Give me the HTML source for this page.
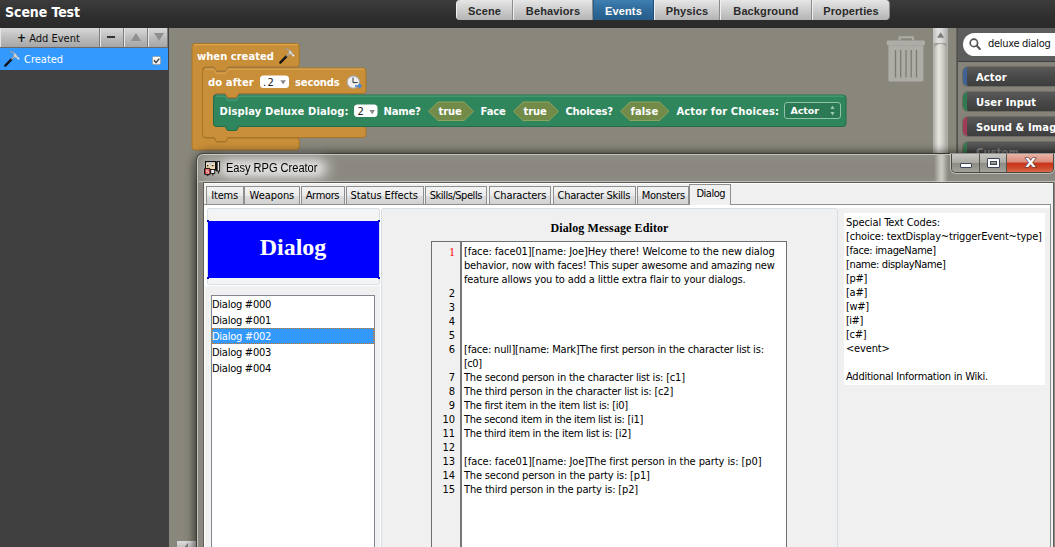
<!DOCTYPE html>
<html>
<head>
<meta charset="utf-8">
<title>Scene Test</title>
<style>
html,body{margin:0;padding:0;}
body{width:1055px;height:547px;overflow:hidden;position:relative;background:#89877b;font-family:"Liberation Sans",sans-serif;}
.abs{position:absolute;}
#topbar{left:0;top:0;width:1055px;height:28px;background:linear-gradient(#3c3c3c,#2e2e2e 60%,#2a2a2a);}
#title{left:5px;top:4px;color:#fff;font-family:"DejaVu Sans Condensed","DejaVu Sans",sans-serif;font-weight:bold;font-size:14px;letter-spacing:-0.08px;white-space:nowrap;}
.ttab{top:0;height:20px;box-sizing:border-box;background:linear-gradient(#e6e6e6,#cfcfcf 45%,#b4b4b4);border-right:1px solid #8a8a8a;border-left:1px solid #f0f0f0;color:#2a2a2a;font-weight:bold;font-size:11px;letter-spacing:0.12px;text-align:center;line-height:23px;white-space:nowrap;}
.ttab.sel{background:linear-gradient(#3f7fb2,#2f6a9a 50%,#265d8c);color:#fff;border-left:1px solid #2a5f8c;border-right:1px solid #1e4e78;}
#sidebar{left:0;top:28px;width:169px;height:519px;background:#404040;}
.sbtn{top:28px;height:19px;background:linear-gradient(#d9d9d9,#bdbdbd 50%,#a6a6a6);box-sizing:border-box;border-right:1px solid #7e7e7e;border-left:1px solid #e4e4e4;}
#selrow{left:0;top:48px;width:168px;height:22px;background:#3399ff;}
#canvas{left:169px;top:28px;width:789px;height:519px;background:#89877b;}
.blk{font-family:"DejaVu Sans","Liberation Sans",sans-serif;font-weight:bold;font-size:10px;letter-spacing:0.1px;line-height:12px;color:#fff;white-space:nowrap;}
.cat{left:963px;width:110px;height:19px;box-sizing:border-box;border-radius:5px;border-left:4px solid #444;background:linear-gradient(#5a5a5a,#484848 50%,#3e3e3e);color:#fff;font-family:"DejaVu Sans",sans-serif;font-weight:bold;font-size:10px;letter-spacing:0.1px;line-height:21px;padding-left:9px;white-space:nowrap;box-shadow:0 0 0 1px #6e6c63;}

.tah{font-family:"DejaVu Sans Condensed","DejaVu Sans","Liberation Sans",sans-serif;font-size:11px;color:#000;white-space:nowrap;line-height:14px;letter-spacing:-0.08px;}
.wtab{top:186px;height:18px;box-sizing:border-box;border:1px solid #8e8f8f;border-bottom:none;background:linear-gradient(#f3f3f3,#ebebeb 50%,#dddddd 51%,#d2d2d2);text-align:center;line-height:20px;}
.ln{left:433px;width:22px;text-align:right;}
.el{left:464px;}
.sc{left:846px;}
.li{left:212px;}
</style>
</head>
<body>
<div id="topbar" class="abs"></div>
<div id="title" class="abs">Scene Test</div>

<div class="abs ttab" style="left:456px;width:57px;border-radius:4px 0 0 4px;">Scene</div>
<div class="abs ttab" style="left:513px;width:80px;">Behaviors</div>
<div class="abs ttab sel" style="left:593px;width:61px;">Events</div>
<div class="abs ttab" style="left:654px;width:66px;">Physics</div>
<div class="abs ttab" style="left:720px;width:92px;">Background</div>
<div class="abs ttab" style="left:812px;width:78px;border-radius:0 4px 4px 0;">Properties</div>

<div id="sidebar" class="abs"></div>
<div id="canvas" class="abs"></div>
<div id="selrow" class="abs"></div>

<!-- sidebar toolbar -->
<div class="abs sbtn" style="left:0;width:100px;"></div>
<div class="abs sbtn" style="left:100px;width:24px;"></div>
<div class="abs sbtn" style="left:124px;width:24px;"></div>
<div class="abs sbtn" style="left:148px;width:20px;"></div>
<div class="abs" style="left:0;top:47px;width:168px;height:1px;background:#6a6a6a;"></div>
<div class="abs" style="left:17px;top:31px;font-size:11px;color:#111;font-family:'DejaVu Sans Condensed','DejaVu Sans',sans-serif;white-space:nowrap;line-height:15px;"><span style="font-weight:bold;font-size:12px;">+</span> Add Event</div>
<div class="abs" style="left:107px;top:36px;width:8px;height:2px;background:#333;"></div>
<svg class="abs" style="left:130px;top:32px;" width="12" height="10"><polygon points="6,1 11,9 1,9" fill="#8f8f8f"/></svg>
<svg class="abs" style="left:153px;top:32px;" width="12" height="10"><polygon points="1,1 11,1 6,9" fill="#8f8f8f"/></svg>
<div class="abs" style="left:24px;top:52px;font-size:11px;color:#fff;font-family:'DejaVu Sans Condensed','DejaVu Sans',sans-serif;white-space:nowrap;line-height:15px;">Created</div>
<!-- hammer icon -->
<svg class="abs" style="left:4px;top:51px;" width="17" height="17" viewBox="0 0 17 17"><g id="hm"><path d="M1.3,14.6 L7.4,8.4" stroke="#0c0c0c" stroke-width="2.3" stroke-linecap="round"/><path d="M1.6,14.3 L7,8.8" stroke="#8a8a8a" stroke-width="0.6" stroke-dasharray="0.7 0.9" opacity="0.6"/><path d="M7.4,8.4 L10.6,5.1" stroke="#a8a8a8" stroke-width="1.4"/><path d="M5.3,0.6 Q9,0.5 11.2,2.4 Q12.8,3.6 13.2,5 L15,7 L14,8.3 L12.2,6.6 L10.4,6.6 Q9.4,4.2 9.9,2.6 Q8,1.1 5.3,0.6 Z" fill="#d9d9d9" stroke="#8f8f8f" stroke-width="0.5"/><circle cx="14.4" cy="7.6" r="0.95" fill="#fff"/></g></svg>
<!-- checkbox -->
<div class="abs" style="left:152px;top:56px;width:9px;height:9px;background:linear-gradient(#fff,#e9e9e9);border:1px solid #9aa7b4;border-radius:1.5px;box-sizing:border-box;"></div>
<svg class="abs" style="left:152px;top:56px;" width="10" height="10"><path d="M2 4.3 L4 6.6 L7.3 2.6" stroke="#333" stroke-width="1.3" fill="none"/></svg>
<!-- canvas hscroll button -->
<div class="abs" style="left:177px;top:541px;width:20px;height:6px;background:linear-gradient(#dcdcdc,#c4c4c4);"></div>
<svg class="abs" style="left:183px;top:542px;" width="6" height="5"><polygon points="5,1 5,5 1.5,5" fill="#7a7a7a"/></svg>

<!-- blocks -->
<svg class="abs" style="left:0;top:0;" width="1055" height="547" viewBox="0 0 1055 547">
<g stroke-linejoin="round">
<path d="M195,43.5 H296.3 Q299.3,43.5 299.3,46.5 V64 Q299.3,67 296.3,67 H228 l-2.5,4 h-9 l-2.5,-4 H205.5 Q202.5,67 202.5,70 V135 Q202.5,138 205.5,138 H214 l2.5,4 h9 l2.5,-4 H296.3 Q299.3,138 299.3,141 V147 Q299.3,150 296.3,150 H195 Q192,150 192,147 V46.5 Q192,43.5 195,43.5 Z" fill="#c88e38" stroke="#a87428" stroke-width="1"/>
<path d="M194,44.7 H298" stroke="#dba550" stroke-width="1.2" fill="none"/>
<path d="M205.5,68 H214 l2.5,4 h9 l2.5,-4 H363 Q366,68 366,71 V90.5 Q366,93.5 363,93.5 H239 l-2.5,4 h-9 l-2.5,-4 H216.5 Q213.5,93.5 213.5,96.5 V123.5 Q213.5,126.5 216.5,126.5 H225 l2.5,4 h9 l2.5,-4 H363 Q366,126.5 366,129.5 V134.5 Q366,137.5 363,137.5 H228 l-2.5,4 h-9 l-2.5,-4 H205.5 Q202.5,137.5 202.5,134.5 V71 Q202.5,68 205.5,68 Z" fill="#c88e38" stroke="#a87428" stroke-width="1"/>
<path d="M205,69.2 H214 l2.5,4 h9 l2.5,-4 H364" stroke="#dba550" stroke-width="1.2" fill="none"/>
<path d="M216.5,95 H225 l2.5,4 h9 l2.5,-4 H843 Q846,95 846,98 V123.5 Q846,126.5 843,126.5 H239 l-2.5,4 h-9 l-2.5,-4 H216.5 Q213.5,126.5 213.5,123.5 V98 Q213.5,95 216.5,95 Z" fill="#2f855c" stroke="#256c4a" stroke-width="1"/>
<path d="M216,96.2 H225 l2.5,4 h9 l2.5,-4 H844" stroke="#4a9f76" stroke-width="1.2" fill="none"/>
</g>
<!-- dropdown .2 -->
<rect x="260" y="75.5" width="29" height="12.4" rx="3.5" fill="#fff"/>
<polygon points="280.3,80.2 285.9,80.2 283.1,84.4" fill="#8a8a8a"/>
<!-- dropdown 2 -->
<rect x="354" y="104.4" width="23.5" height="12.6" rx="3.5" fill="#fff"/>
<polygon points="369.4,110 375,110 372.2,114.2" fill="#8a8a8a"/>
<!-- hexagons -->
<g fill="#728b49" stroke="#8ea45e" stroke-width="1">
<polygon points="428.5,111.3 438,102 464,102 473.5,111.3 464,120.5 438,120.5"/>
<polygon points="513.5,111.3 523,102 549,102 558.5,111.3 549,120.5 523,120.5"/>
<polygon points="620.5,111.3 630,102 659.5,102 669,111.3 659.5,120.5 630,120.5"/>
</g>
<!-- actor select -->
<rect x="784.5" y="102.5" width="56" height="16" rx="2.5" fill="#2b7a55" stroke="#8fc2a8" stroke-width="1"/>
<polygon points="830.5,109 834.5,109 832.5,105.5" fill="#9cc7b0"/>
<polygon points="830.5,112 834.5,112 832.5,115.5" fill="#9cc7b0"/>
<!-- clock icon -->
<circle cx="353.3" cy="82.1" r="6.2" fill="#efefef" stroke="#a9a9a9" stroke-width="1.1"/>
<path d="M353,77.6 V82.6 H357.6" stroke="#333" stroke-width="1" fill="none"/>
<path d="M355,86 h6 m-2,-2 l2,2 l-2,2" stroke="#3f86dd" stroke-width="1.5" fill="none"/>
<!-- hammer on block -->
<g transform="translate(279,48)"><g><path d="M1.3,14.6 L7.4,8.4" stroke="#0c0c0c" stroke-width="2.3" stroke-linecap="round"/><path d="M1.6,14.3 L7,8.8" stroke="#8a8a8a" stroke-width="0.6" stroke-dasharray="0.7 0.9" opacity="0.6"/><path d="M7.4,8.4 L10.6,5.1" stroke="#a8a8a8" stroke-width="1.4"/><path d="M5.3,0.6 Q9,0.5 11.2,2.4 Q12.8,3.6 13.2,5 L15,7 L14,8.3 L12.2,6.6 L10.4,6.6 Q9.4,4.2 9.9,2.6 Q8,1.1 5.3,0.6 Z" fill="#d9d9d9" stroke="#8f8f8f" stroke-width="0.5"/><circle cx="14.4" cy="7.6" r="0.95" fill="#fff"/></g></g>
</svg>
<div class="abs blk" style="left:197px;top:51px;letter-spacing:0px;">when created</div>
<div class="abs blk" style="left:208px;top:77px;">do after</div>
<div class="abs blk" style="left:263px;top:77px;color:#222;font-weight:normal;letter-spacing:1.2px;">.2</div>
<div class="abs blk" style="left:295px;top:77px;letter-spacing:-0.17px;">seconds</div>
<div class="abs blk" style="left:219.5px;top:106px;">Display Deluxe Dialog:</div>
<div class="abs blk" style="left:357.5px;top:106px;color:#222;font-weight:normal;">2</div>
<div class="abs blk" style="left:383.5px;top:106px;letter-spacing:-0.2px;">Name?</div>
<div class="abs blk" style="left:438.5px;top:106px;letter-spacing:-0.15px;">true</div>
<div class="abs blk" style="left:480.5px;top:106px;letter-spacing:-0.1px;">Face</div>
<div class="abs blk" style="left:523.5px;top:106px;letter-spacing:-0.15px;">true</div>
<div class="abs blk" style="left:565.5px;top:106px;letter-spacing:-0.23px;">Choices?</div>
<div class="abs blk" style="left:630.5px;top:106px;">false</div>
<div class="abs blk" style="left:676.5px;top:106px;">Actor for Choices:</div>
<div class="abs blk" style="left:790.5px;top:105px;letter-spacing:-0.1px;font-size:9.5px;">Actor</div>

<!-- trash -->
<svg class="abs" style="left:885px;top:34px;" width="42" height="50" viewBox="0 0 42 50">
<path d="M14.7,6.6 V3.3 H28 V6.6" fill="none" stroke="#adaca7" stroke-width="2"/>
<rect x="1.8" y="6.6" width="38.2" height="4.6" rx="1" fill="#adaca7"/>
<path d="M3.4,11.2 H38.4 V46 Q38.4,47.6 36.8,47.6 H5 Q3.4,47.6 3.4,46 Z" fill="#adaca7"/>
<g stroke="#7d7b71" stroke-width="1.3"><path d="M10.5,16 V43.5"/><path d="M15.7,16 V43.5"/><path d="M21,16 V43.5"/><path d="M26.2,16 V43.5"/><path d="M31.5,16 V43.5"/></g>
</svg>
<!-- scrollbar -->
<div class="abs" style="left:933px;top:28px;width:15px;height:125px;background:linear-gradient(90deg,#b9b8b2,#9d9c95 20%,#a9a8a1 50%,#9a9992 80%,#b3b2ac);"></div>
<div class="abs" style="left:933px;top:28px;width:15px;height:15px;background:linear-gradient(90deg,#bdbdbb,#e3e3e2 35%,#d6d6d5 60%,#a9a9a7);"></div>
<svg class="abs" style="left:933px;top:28px;" width="15" height="15"><polygon points="4,9.8 11.2,9.8 7.6,4.2" fill="#7e7e7e"/></svg>
<div class="abs" style="left:934px;top:44px;width:13px;height:120px;border-radius:6px 6px 0 0;background:linear-gradient(90deg,#b5b4ac,#e6e5e0 35%,#d6d5cf 60%,#a9a79f);"></div>
<div class="abs" style="left:956px;top:28px;width:2px;height:125px;background:linear-gradient(90deg,#6d6b62,#4a4945);"></div>
<!-- right palette -->
<div class="abs" style="left:958px;top:28px;width:97px;height:33px;background:#5d5d5d;"></div>
<div class="abs" style="left:958px;top:61px;width:97px;height:1px;background:#3e3e3c;"></div>
<div class="abs" style="left:958px;top:62px;width:97px;height:92px;background:#86847a;"></div>
<div class="abs" style="left:963px;top:33px;width:110px;height:23px;border-radius:11.5px;background:#fff;"></div>
<svg class="abs" style="left:966px;top:35px;" width="18" height="18"><circle cx="7.9" cy="7.9" r="3.7" fill="none" stroke="#555" stroke-width="1.7"/><path d="M10.6,10.6 L13.9,13.9" stroke="#555" stroke-width="2.1" stroke-linecap="round"/></svg>
<div class="abs" style="left:988px;top:37px;font-family:'DejaVu Sans Condensed','DejaVu Sans',sans-serif;font-size:11px;letter-spacing:-0.3px;color:#111;white-space:nowrap;line-height:14px;">deluxe dialog</div>
<div class="abs cat" style="top:67px;border-left-color:#3e6296;">Actor</div>
<div class="abs cat" style="top:92px;border-left-color:#2f7a4f;">User Input</div>
<div class="abs cat" style="top:117px;border-left-color:#a03a55;">Sound &amp; Images</div>
<div class="abs cat" style="top:142px;border-left-color:#3a7a52;color:#888;">Custom</div>

<!-- RPG window -->
<div class="abs" style="left:199px;top:157px;width:900px;height:420px;border-radius:10px;box-shadow:0 0 9px 5px rgba(0,0,0,0.6);"></div>
<div class="abs" id="win" style="left:196px;top:153px;width:901px;height:420px;box-sizing:border-box;border:1px solid #3b3a36;border-radius:7px 7px 0 0;background:linear-gradient(#8f8d85,#8a8880 10px,#8a8880 24px,#908e86 28px,#8a8880 29px);box-shadow:inset 0 0 0 1px #c4c3bc;"></div>
<div class="abs" style="left:200px;top:157px;width:132px;height:23px;border-radius:11px;background:rgba(255,255,255,0.32);filter:blur(6px);"></div>
<div class="abs" style="left:222px;top:160px;width:102px;height:17px;border-radius:8px;background:rgba(255,255,255,0.6);filter:blur(4px);"></div>
<div class="abs" style="left:934px;top:155px;width:14px;height:27px;background:linear-gradient(90deg,rgba(215,214,208,0),rgba(215,214,208,0.8) 45%,rgba(215,214,208,0.8) 60%,rgba(215,214,208,0));"></div>
<div class="abs" style="left:199px;top:181px;width:856px;height:1px;background:rgba(220,219,212,0.6);"></div>
<div class="abs" style="left:226px;top:161px;font-size:12px;line-height:14px;color:#000;white-space:nowrap;transform:scaleX(0.92);transform-origin:0 0;">Easy RPG Creator</div>
<!-- icon -->
<svg class="abs" style="left:204px;top:160px;" width="17" height="17" viewBox="0 0 17 17">
<rect x="1.5" y="1.5" width="10" height="8" fill="#f3dcb4" stroke="#111" stroke-width="1"/>
<rect x="2" y="2" width="9" height="1.2" fill="#b9b9b9"/>
<rect x="5.2" y="2" width="2.6" height="4.2" fill="#c9c9c9"/>
<rect x="3" y="5" width="1.3" height="1.3" fill="#111"/><rect x="8.2" y="5" width="1.3" height="1.3" fill="#111"/>
<rect x="11.5" y="1.5" width="1.5" height="9.5" fill="#111"/>
<rect x="13.2" y="1.5" width="2.4" height="9.6" fill="#e4e4e4" stroke="#111" stroke-width="0.9"/>
<rect x="13.9" y="11" width="1" height="2.6" fill="#111"/>
<rect x="0.6" y="8.4" width="5.6" height="6.2" rx="0.6" fill="#cf3030" stroke="#111" stroke-width="1"/>
<path d="M4.9,9.9 H2.4 V11.5 H4.6 V13.2 H1.9" fill="none" stroke="#f1d6d6" stroke-width="0.9"/>
<rect x="6.7" y="9.5" width="4" height="4" fill="#ececec" stroke="#111" stroke-width="0.9"/>
<rect x="8.3" y="13.5" width="1" height="2" fill="#111"/><rect x="3.3" y="14.6" width="1" height="1.6" fill="#111"/>
</svg>
<!-- window buttons -->
<div class="abs" style="left:951px;top:154px;width:103px;height:19px;box-sizing:border-box;border:1px solid #4a4944;border-top:none;border-radius:0 0 5px 5px;box-shadow:0 0 0 1px rgba(255,255,255,0.45);overflow:hidden;">
<div class="abs" style="left:0;top:0;width:27px;height:18px;background:linear-gradient(#c9c8c3,#a9a8a1 48%,#8e8d85 52%,#a3a29a);border-right:1px solid #55544f;"></div>
<div class="abs" style="left:28px;top:0;width:26px;height:18px;background:linear-gradient(#c9c8c3,#a9a8a1 48%,#8e8d85 52%,#a3a29a);border-right:1px solid #55544f;"></div>
<div class="abs" style="left:55px;top:0;width:47px;height:18px;background:linear-gradient(#e9b4a5,#da8b78 45%,#c9351a 50%,#cf4628 75%,#d86a4c);"></div>
</div>
<svg class="abs" style="left:951px;top:154px;" width="103" height="19">
<rect x="9.5" y="9.5" width="11" height="4" rx="0.5" fill="#fff" stroke="#3d4458" stroke-width="1"/>
<rect x="36.5" y="4.5" width="12" height="9" rx="0.5" fill="none" stroke="#3d4458" stroke-width="1"/><rect x="38" y="6" width="9" height="6" fill="none" stroke="#fff" stroke-width="2"/><rect x="39.5" y="7.5" width="6" height="3" fill="none" stroke="#3d4458" stroke-width="1"/>
<text x="79.7" y="13.2" text-anchor="middle" font-family="DejaVu Sans, sans-serif" font-weight="bold" font-size="12" fill="#fff" stroke="#5a3a3a" stroke-width="1.2" paint-order="stroke" transform="translate(79.7 0) scale(1.15 1) translate(-79.7 0)">X</text>
</svg>
<!-- client -->
<div class="abs" style="left:203px;top:182px;width:851px;height:380px;box-sizing:border-box;border:1px solid #5e5d58;background:#f0f0f0;"></div>
<div class="abs" style="left:204px;top:183px;width:849px;height:1px;background:#fcfcfc;"></div>
<!-- tab pane -->
<div class="abs" style="left:204px;top:204px;width:847px;height:360px;box-sizing:border-box;border-top:1px solid #8e8f8f;border-right:1px solid #8e8f8f;background:#fff;"></div>
<div class="abs" style="left:838px;top:208px;width:212px;height:350px;background:#f0f0f0;"></div>
<div class="abs wtab" style="left:206px;width:38px;"></div><div class="abs tah" style="left:211.2px;top:189px;letter-spacing:-0.155px;">Items</div>
<div class="abs wtab" style="left:244px;width:56px;"></div><div class="abs tah" style="left:249.6px;top:189px;letter-spacing:-0.067px;">Weapons</div>
<div class="abs wtab" style="left:301px;width:44px;"></div><div class="abs tah" style="left:305.7px;top:189px;letter-spacing:-0.343px;">Armors</div>
<div class="abs wtab" style="left:346px;width:78px;"></div><div class="abs tah" style="left:350.5px;top:189px;letter-spacing:-0.083px;">Status Effects</div>
<div class="abs wtab" style="left:425px;width:62px;"></div><div class="abs tah" style="left:429.7px;top:189px;letter-spacing:-0.451px;">Skills/Spells</div>
<div class="abs wtab" style="left:489px;width:62px;"></div><div class="abs tah" style="left:493.5px;top:189px;letter-spacing:-0.122px;">Characters</div>
<div class="abs wtab" style="left:553px;width:83px;"></div><div class="abs tah" style="left:557.6px;top:189px;letter-spacing:-0.308px;">Character Skills</div>
<div class="abs wtab" style="left:637px;width:52px;"></div><div class="abs tah" style="left:641.7px;top:189px;letter-spacing:-0.252px;">Monsters</div>

<div class="abs" style="left:689px;top:184px;width:42px;height:21px;box-sizing:border-box;border:1px solid #8e8f8f;border-bottom:none;background:#f0f0f0;"></div>
<div class="abs tah" style="left:696.5px;top:187px;letter-spacing:-0.5px;">Dialog</div>
<!-- left top panel -->
<div class="abs" style="left:207px;top:208px;width:173px;height:77px;box-sizing:border-box;border:1px solid #d5dfe5;border-radius:2px;background:#f4f4f4;"></div>
<div class="abs" style="left:208px;top:221px;width:171px;height:57px;background:#0000ff;box-sizing:border-box;"></div>
<div class="abs" style="left:207px;top:232px;width:172px;text-align:center;font-family:'Liberation Serif',serif;font-weight:bold;font-size:24px;line-height:30px;color:#fff;">Dialog</div>
<div class="abs" style="left:207px;top:220px;width:2px;height:2px;background:#0000c0;"></div><div class="abs" style="left:378px;top:220px;width:2px;height:2px;background:#0000c0;"></div><div class="abs" style="left:207px;top:277px;width:2px;height:2px;background:#0000c0;"></div><div class="abs" style="left:378px;top:277px;width:2px;height:2px;background:#0000c0;"></div>
<!-- left lower panel + list -->
<div class="abs" style="left:205px;top:286px;width:175px;height:270px;background:#f0f0f0;"></div>
<div class="abs" style="left:211px;top:295px;width:164px;height:260px;box-sizing:border-box;border:1px solid #828790;background:#fff;"></div>
<div class="abs" style="left:212px;top:328px;width:162px;height:16px;box-sizing:border-box;border:1px dotted #d2761a;background:#3399ff;"></div>
<div class="abs tah li" style="top:298px;letter-spacing:-0.259px;">Dialog #000</div>
<div class="abs tah li" style="top:314px;letter-spacing:-0.259px;">Dialog #001</div>
<div class="abs tah li" style="top:330px;letter-spacing:-0.259px;color:#fff;">Dialog #002</div>
<div class="abs tah li" style="top:346px;letter-spacing:-0.259px;">Dialog #003</div>
<div class="abs tah li" style="top:362px;letter-spacing:-0.259px;">Dialog #004</div>

<!-- middle panel -->
<div class="abs" style="left:381px;top:208px;width:457px;height:350px;box-sizing:border-box;border:1px solid #d5dfe5;border-radius:2px;background:#f0f0f0;"></div>
<div class="abs" style="left:432px;top:220px;width:355px;text-align:center;font-family:'Liberation Serif',serif;font-weight:bold;font-size:12px;letter-spacing:0.1px;line-height:16px;color:#000;">Dialog Message Editor</div>
<div class="abs" style="left:431px;top:241px;width:356px;height:320px;box-sizing:border-box;border:1px solid #6f6f6f;background:#fff;"></div>
<div class="abs" style="left:432px;top:242px;width:30px;height:320px;box-sizing:border-box;border-right:2px solid #777;background:#f0f0f0;"></div>
<div class="abs tah ln" style="top:245px;color:#ff0000;font-family:'Liberation Serif',serif;font-size:12px;">1</div>
<div class="abs tah el" style="top:245px;letter-spacing:-0.100px;">[face: face01][name: Joe]Hey there! Welcome to the new dialog</div>
<div class="abs tah el" style="top:259px;letter-spacing:-0.209px;">behavior, now with faces! This super awesome and amazing new</div>
<div class="abs tah el" style="top:273px;letter-spacing:-0.160px;">feature allows you to add a little extra flair to your dialogs.</div>
<div class="abs tah ln" style="top:287px;">2</div>
<div class="abs tah ln" style="top:301px;">3</div>
<div class="abs tah ln" style="top:315px;">4</div>
<div class="abs tah ln" style="top:329px;">5</div>
<div class="abs tah ln" style="top:343px;">6</div>
<div class="abs tah el" style="top:343px;letter-spacing:-0.186px;">[face: null][name: Mark]The first person in the character list is:</div>
<div class="abs tah el" style="top:357px;letter-spacing:-0.490px;">[c0]</div>
<div class="abs tah ln" style="top:371px;">7</div>
<div class="abs tah el" style="top:371px;letter-spacing:-0.205px;">The second person in the character list is: [c1]</div>
<div class="abs tah ln" style="top:385px;">8</div>
<div class="abs tah el" style="top:385px;letter-spacing:-0.198px;">The third person in the character list is: [c2]</div>
<div class="abs tah ln" style="top:399px;">9</div>
<div class="abs tah el" style="top:399px;letter-spacing:-0.290px;">The first item in the item list is: [i0]</div>
<div class="abs tah ln" style="top:413px;">10</div>
<div class="abs tah el" style="top:413px;letter-spacing:-0.302px;">The second item in the item list is: [i1]</div>
<div class="abs tah ln" style="top:427px;">11</div>
<div class="abs tah el" style="top:427px;letter-spacing:-0.311px;">The third item in the item list is: [i2]</div>
<div class="abs tah ln" style="top:441px;">12</div>
<div class="abs tah ln" style="top:455px;">13</div>
<div class="abs tah el" style="top:455px;letter-spacing:-0.087px;">[face: face01][name: Joe]The first person in the party is: [p0]</div>
<div class="abs tah ln" style="top:469px;">14</div>
<div class="abs tah el" style="top:469px;letter-spacing:-0.177px;">The second person in the party is: [p1]</div>
<div class="abs tah ln" style="top:483px;">15</div>
<div class="abs tah el" style="top:483px;letter-spacing:-0.167px;">The third person in the party is: [p2]</div>

<!-- right panel -->
<div class="abs" style="left:844px;top:213px;width:201px;height:172px;background:#fff;"></div>
<div class="abs tah sc" style="top:216px;letter-spacing:-0.084px;">Special Text Codes:</div>
<div class="abs tah sc" style="top:230px;letter-spacing:-0.177px;">[choice: textDisplay~triggerEvent~type]</div>
<div class="abs tah sc" style="top:244px;letter-spacing:-0.324px;">[face: imageName]</div>
<div class="abs tah sc" style="top:258px;letter-spacing:-0.375px;">[name: displayName]</div>
<div class="abs tah sc" style="top:272px;letter-spacing:-0.326px;">[p#]</div>
<div class="abs tah sc" style="top:286px;letter-spacing:-0.271px;">[a#]</div>
<div class="abs tah sc" style="top:300px;letter-spacing:-0.353px;">[w#]</div>
<div class="abs tah sc" style="top:314px;letter-spacing:-0.494px;">[i#]</div>
<div class="abs tah sc" style="top:328px;letter-spacing:-0.291px;">[c#]</div>
<div class="abs tah sc" style="top:342px;letter-spacing:-0.169px;">&lt;event&gt;</div>
<div class="abs tah sc" style="top:370px;letter-spacing:-0.235px;">Additional Information in Wiki.</div>

</body>
</html>
